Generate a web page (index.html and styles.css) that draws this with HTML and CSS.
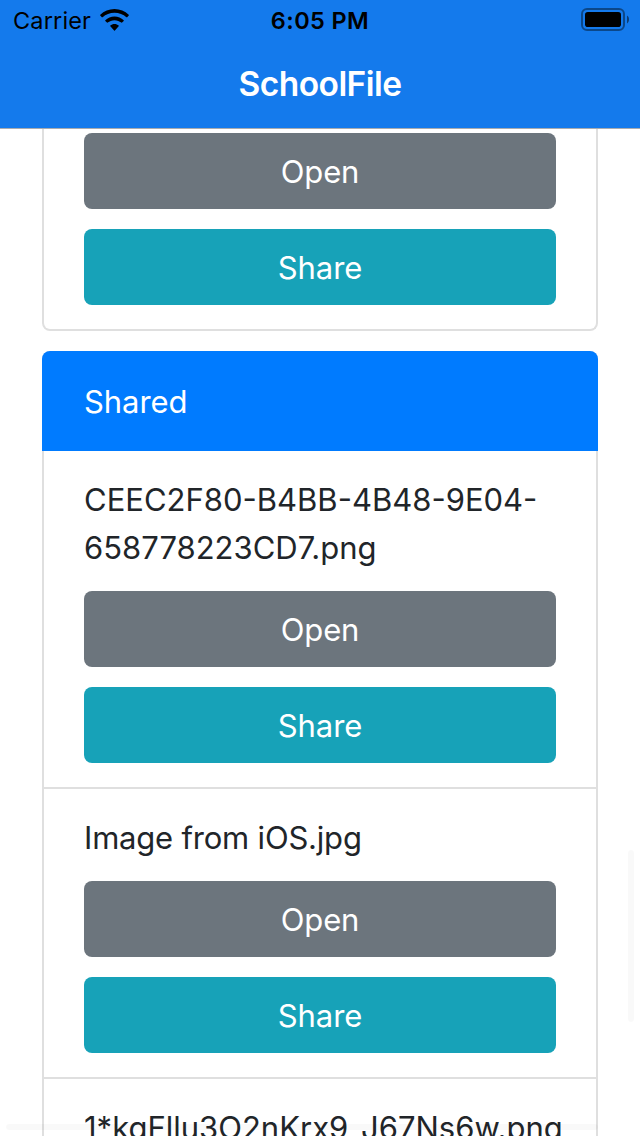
FILE: index.html
```html
<!DOCTYPE html>
<html lang="en">
<head>
<meta charset="utf-8">
<title>SchoolFile</title>
<link rel="stylesheet" href="styles.css">
</head>
<body>
<div class="screen">
  <header class="top">
    <div class="status">
      <div class="carrier"><span class="carrier-name">Carrier</span>
        <svg class="wifi" width="29" height="22" viewBox="0 0 30 22" preserveAspectRatio="none">
          <path d="M15 0C9.300 0 4.100 2.200 .300 5.800Q-.100 6.200 .300 6.600L1.900 8.200Q2.300 8.500 2.700 8.200C5.900 5.300 10.300 3.700 15 3.700S24.100 5.300 27.300 8.200Q27.700 8.500 28.100 8.200L29.700 6.600Q30.100 6.200 29.700 5.800C25.900 2.200 20.700 0 15 0Z"/>
          <path d="M15 7.500C11.300 7.500 8 8.900 5.500 11.200Q5.100 11.600 5.500 12L7.200 13.600Q7.600 13.900 8 13.600C9.800 12.100 12.300 11.200 15 11.200S20.200 12.100 22 13.600Q22.400 13.900 22.800 13.600L24.500 12Q24.900 11.600 24.500 11.200C22 8.900 18.700 7.500 15 7.500Z"/>
          <path d="M15 15C13.300 15 11.800 15.600 10.700 16.500Q10.300 16.900 10.700 17.300L14.600 21.600Q15 22 15.400 21.600L19.300 17.300Q19.700 16.900 19.300 16.500C18.200 15.600 16.700 15 15 15Z"/>
        </svg>
      </div>
      <div class="time">6:05 PM</div>
      <svg class="battery" width="49" height="24" viewBox="0 0 49 24">
        <rect x="1" y="1" width="42" height="21" rx="5" fill="none" stroke="#000" stroke-opacity=".42" stroke-width="2"/>
        <rect x="4" y="4" width="36" height="15" rx="2.800"/>
        <path d="M46 7.500C47.300 8.300 48 9.700 48 11.500S47.300 14.700 46 15.500Z" fill-opacity=".5"/>
      </svg>
    </div>
    <h1 class="title">SchoolFile</h1>
  </header>
  <main class="content">
    <section class="card card-tail">
      <div class="item item-tail">
        <div class="btn open">Open</div>
        <div class="btn share">Share</div>
      </div>
    </section>
    <section class="card">
      <h2 class="card-header">Shared</h2>
      <div class="item">
        <p class="name">CEEC2F80-B4BB-4B48-9E04-<br>658778223CD7.png</p>
        <div class="btn open">Open</div>
        <div class="btn share">Share</div>
      </div>
      <div class="item">
        <p class="name name-tight">Image from iOS.jpg</p>
        <div class="btn open">Open</div>
        <div class="btn share">Share</div>
      </div>
      <div class="item">
        <p class="name">1*kgFllu3O2nKrx9_J67Ns6w.png</p>
      </div>
    </section>
  </main>
  <div class="scroll-v"></div>
  <div class="scroll-h"></div>
</div>
</body>
</html>
```
FILE: styles.css
```css
* { box-sizing: border-box; }
body { margin: 0; background: #fff; font-family: Inter, "Liberation Sans", sans-serif; overflow: hidden; }
.screen { position: relative; display: flex; flex-direction: column; height: 1136px; overflow: hidden; }
.top { flex: none; height: 129px; background: #147aec; border-bottom: 1px solid #a7abb0; }
.status { display: grid; grid-template-columns: 1fr auto 1fr; height: 40px; padding: 0 10px 0 13px; color: #000; font-size: 23.5px; line-height: 42px; }
.carrier { display: flex; gap: 10px; }
.carrier-name { width: 77px; letter-spacing: .15px; white-space: nowrap; }
.wifi { margin-top: 9px; }
.time { margin-left: -3px; font-weight: 560; letter-spacing: .4px; }
.battery { justify-self: end; margin-top: 8px; }
.title { margin: 0; color: #fff; font-size: 33.5px; font-weight: 580; line-height: 89px; text-align: center; letter-spacing: -.55px; }
.content { flex: 1; min-height: 0; padding: 0 42px; overflow: hidden; }
.card { margin-bottom: 20px; border: 2px solid #dfdfdf; border-radius: 8px; background: #fff; }
.card-tail { border-top: 0; border-top-left-radius: 0; border-top-right-radius: 0; }
.card-header { margin: -2px -2px 0; padding: 27px 42px 25px; height: 100px; background: #007bff; color: #fff; border-radius: 8px 8px 0 0; font-size: 31px; font-weight: 400; line-height: 48px; letter-spacing: -.05px; }
.item { padding: 24px 40px; border-bottom: 2px solid #dfdfdf; font-size: 31px; line-height: 48px; color: #212529; }
.item:last-child { border-bottom: 0; }
.item-tail { padding-top: 4px; }
.name { margin: 0; padding: 1px 0 19px; white-space: nowrap; }
.name-tight { letter-spacing: -.2px; }
.btn { height: 76px; border-radius: 8px; color: #fff; text-align: center; line-height: 78px; letter-spacing: -.1px; }
.btn + .btn { margin-top: 20px; }
.open { background: #6c757d; }
.share { background: #17a2b8; }
.scroll-v { position: absolute; right: 6px; top: 850px; width: 6px; height: 172px; border-radius: 3px; background: rgba(0, 0, 0, .025); }
.scroll-h { position: absolute; left: 6px; top: 1124px; width: 592px; height: 6px; border-radius: 3px; background: rgba(0, 0, 0, .025); }
```
